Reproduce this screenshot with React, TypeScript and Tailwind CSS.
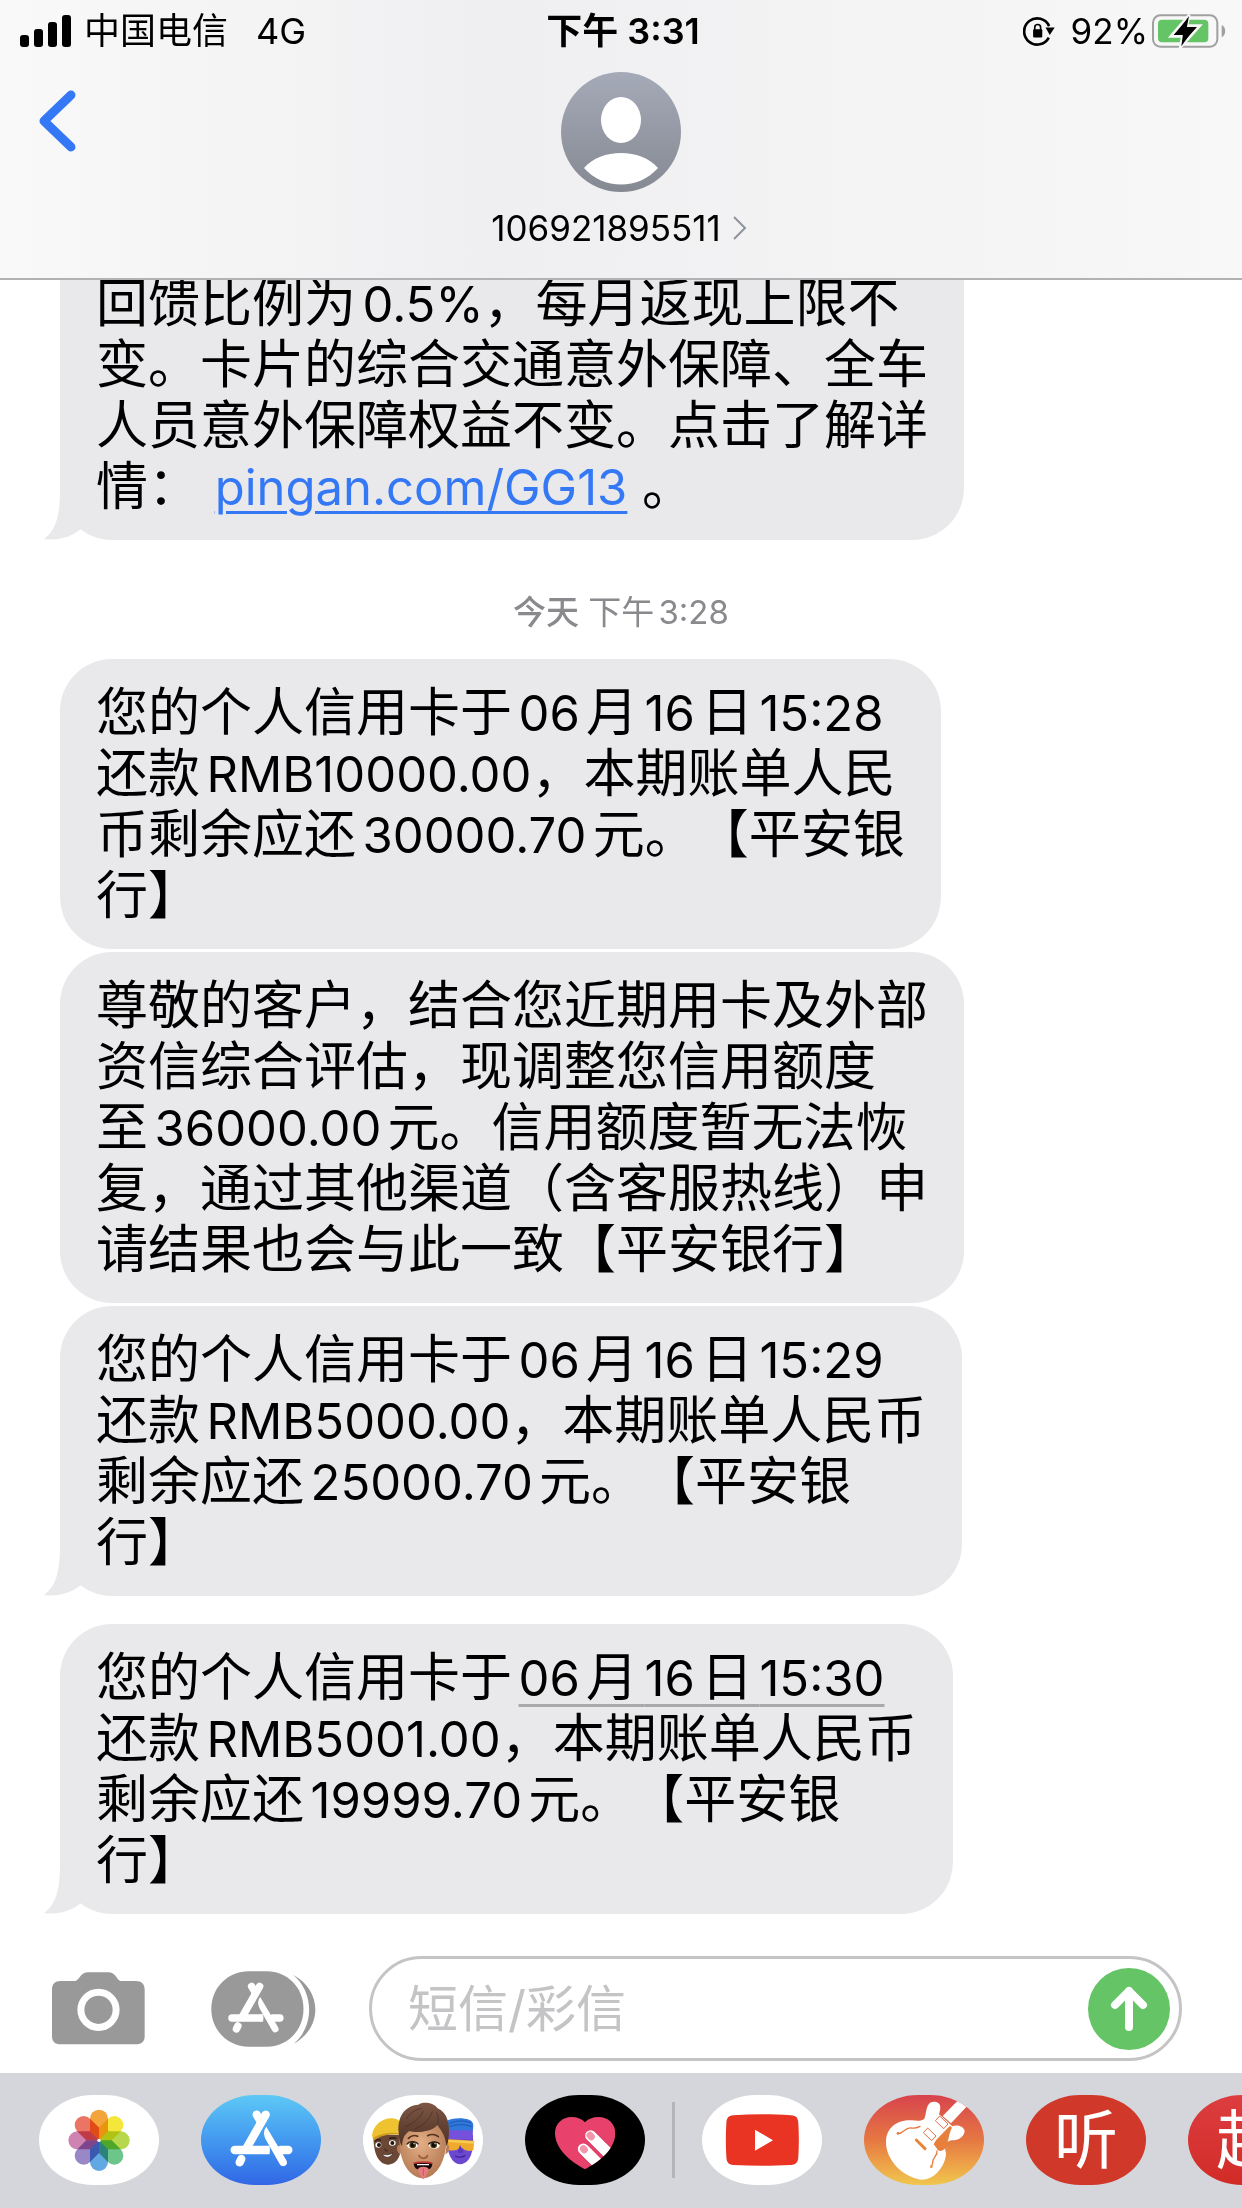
import React from 'react';
import clsx from 'clsx';

interface BubbleProps {
  lines: React.ReactNode[];
  tail?: boolean;
  className?: string;
}

// Latin letters and digits run slightly smaller than the Chinese text around them
const mixed = (text: string) =>
  text.split(/([\x21-\x7e]+)/).map((part, i) =>
    i % 2 ? <span key={i} className="text-[49px] leading-none">{part}</span> : part
  );

const Bubble: React.FC<BubbleProps> = ({ lines, tail = false, className }) => (
  <div
    className={clsx(
      'relative w-fit bg-[#e9e9eb] px-9 py-[23px] text-[52px] leading-[61px] whitespace-nowrap',
      className ?? 'rounded-[52px]'
    )}
  >
    {lines.map((line, i) => (
      <p key={i}>{typeof line === 'string' ? mixed(line) : line}</p>
    ))}
    {tail && (
      <svg viewBox="0 0 60 50" className="absolute -left-4 bottom-0 w-[60px] h-[50px]" fill="#e9e9eb">
        <path d="M16 0C16 26 12 40 0 49C14 51 28 47 38 38L60 0Z" />
      </svg>
    )}
  </div>
);

const AppStoreGlyph: React.FC = () => (
  <g fill="none" stroke="#fff" strokeWidth="25" strokeLinecap="round">
    <path d="M797 554L738 657" />
    <path d="M770 554L782 574" />
    <path d="M704 660H797" />
    <path d="M797 660H809" strokeLinecap="butt" />
    <path d="M842 660H865" />
    <path d="M724 687L719 697" />
    <path d="M799 590C790 602 790 614 798 630L839 702C843 709 851 711 857 706C862 702 862 697 859 691Z" fill="#fff" stroke="none" />
  </g>
);

const PETALS = ['#f3a43b', '#f5e63b', '#b7d84c', '#6cc58a', '#62a8e2', '#9a87c8', '#cf83b3', '#ec7464'];

const PhotosIcon: React.FC = () => (
  <svg viewBox="117 495 360 270" className="w-full h-full">
    <g transform="translate(297 631)" className="isolate">
      {PETALS.map((color, i) => (
        <path
          key={color}
          d="M0 0L-27 -27V-65A27 27 0 0 1 27 -65V-27Z"
          fill={color}
          transform={`rotate(${i * 45})`}
          className="mix-blend-multiply"
        />
      ))}
      <circle r="5" fill="#fff" />
    </g>
  </svg>
);

const MemojiIcon: React.FC = () => (
  <svg viewBox="24 30 360 270" className="w-full h-full">
    <defs>
      <linearGradient id="hair" x1="0" y1="0" x2="0" y2="1">
        <stop offset="0" stopColor="#7d5745" />
        <stop offset="1" stopColor="#4d3024" />
      </linearGradient>
      <radialGradient id="skin" cx=".45" cy=".4" r=".6">
        <stop offset="0" stopColor="#e3ae86" />
        <stop offset="1" stopColor="#b57b55" />
      </radialGradient>
    </defs>
    {/* left face */}
    <path d="M55 148C55 200 66 236 98 239C128 238 142 210 142 150Z" fill="#6b4735" />
    <path d="M51 152C54 120 82 99 112 100C128 101 138 108 142 128L140 147C105 143 78 146 55 165Z" fill="#eec32f" />
    <path d="M54 158C80 143 110 141 140 145V150C105 146 78 151 56 167Z" fill="#cf9c1d" />
    <ellipse cx="70" cy="180" rx="9" ry="8" fill="#fff" />
    <circle cx="72" cy="180" r="6" fill="#20140f" />
    <ellipse cx="112" cy="174" rx="10" ry="8" fill="#fff" />
    <circle cx="112" cy="174" r="6" fill="#20140f" />
    <path d="M60 169C66 163 72 163 78 166M102 161C110 157 118 158 124 161" fill="none" stroke="#2b1a12" strokeWidth="4" />
    <path d="M82 207C94 211 104 210 113 204C110 218 90 222 82 207Z" fill="#fff" stroke="#3a2016" strokeWidth="2" />
    <path d="M90 190C88 197 95 199 98 195" fill="none" stroke="#4a2d20" strokeWidth="4" />
    {/* right face */}
    <path d="M274 150H354C356 200 347 234 316 238C290 237 276 208 274 150Z" fill="#6a48cf" />
    <path d="M272 110C290 97 325 98 342 104C356 109 356 120 354 133L352 150H276Z" fill="#2f77d8" />
    <path d="M284 116C305 105 330 106 348 114M284 125C305 117 330 117 350 125" fill="none" stroke="#1c58b5" strokeWidth="3" />
    <path d="M276 136H353V162H276Z" fill="#7450dc" />
    <path d="M274 162L358 167L355 195C345 200 332 199 323 190L313 190C305 197 290 199 278 194Z" fill="#efa92b" />
    <path d="M276 164L357 169V176L276 171Z" fill="#f8cb55" />
    <path d="M315 180L308 202C315 206 322 205 326 201Z" fill="#5937bd" />
    <path d="M300 213C310 218 322 217 331 211" fill="none" stroke="#41249c" strokeWidth="4" />
    {/* front face */}
    <path d="M134 180C123 177 123 204 137 208ZM275 178C286 176 285 204 271 208Z" fill="#b87c56" />
    <path d="M134 130C130 190 137 240 172 268C192 283 214 284 235 268C268 240 277 190 275 130C230 95 170 98 134 130Z" fill="url(#skin)" />
    <path d="M131 142C126 95 150 62 190 59C204 49 235 52 248 70C278 83 288 120 279 172L274 184C272 155 263 142 247 120C232 141 180 145 164 138C150 146 143 157 141 184C134 174 132 158 131 142Z" fill="url(#hair)" />
    <path d="M150 126C170 118 196 100 205 78M180 132C208 120 226 100 232 80M155 100C165 85 180 74 200 70M248 120C252 105 250 90 244 80" fill="none" stroke="#432a1f" strokeWidth="3" opacity=".6" />
    <path d="M160 160C168 151 180 150 188 154M218 152C228 146 242 148 250 155" fill="none" stroke="#54331f" strokeWidth="5" strokeLinecap="round" />
    <ellipse cx="172" cy="181" rx="16" ry="10" fill="#fff" />
    <ellipse cx="238" cy="181" rx="16" ry="10" fill="#fff" />
    <circle cx="173" cy="180" r="10" fill="#4a3a12" />
    <circle cx="236" cy="180" r="10" fill="#4a3a12" />
    <circle cx="173" cy="180" r="6" fill="#0d0a05" />
    <circle cx="236" cy="180" r="6" fill="#0d0a05" />
    <circle cx="177" cy="176" r="2" fill="#fff" />
    <circle cx="240" cy="176" r="2" fill="#fff" />
    <path d="M156 178C162 168 182 167 190 178M220 178C228 168 248 168 254 178" fill="none" stroke="#2a1810" strokeWidth="4" />
    <path d="M192 212C196 222 214 222 217 212" fill="none" stroke="#a0623f" strokeWidth="6" strokeLinecap="round" />
    <path d="M176 235C190 230 218 230 232 235C232 250 222 256 205 256C186 256 177 250 176 235Z" fill="#17090a" />
    <path d="M176 235C190 230 218 230 232 235" fill="none" stroke="#c33b34" strokeWidth="5" />
    <path d="M186 237H222V241H186Z" fill="#fff" />
    <path d="M189 252C194 243 216 243 221 252C216 262 214 276 205 283C195 276 193 262 189 252Z" fill="#e87b80" />
    <path d="M205 250V272" stroke="#c8555c" strokeWidth="3" />
  </svg>
);

const HeartTouchIcon: React.FC = () => (
  <svg viewBox="555 495 360 270" className="w-full h-full">
    <defs>
      <clipPath id="heart">
        <path d="M735 718C690 695 645 655 645 610C645 580 668 561 694 561C712 561 726 567 735 577C744 567 758 561 776 561C804 561 826 581 826 610C826 655 780 695 735 718Z" />
      </clipPath>
    </defs>
    <g clipPath="url(#heart)">
      <path d="M640 555H830V725H640Z" fill="#e8426c" />
      <g strokeLinecap="round" fill="none">
        <path d="M734 662L792 720M757 622L840 705" stroke="#c42f55" strokeWidth="38" opacity=".5" />
        <path d="M730 657L792 719M752 617L840 705" stroke="#fff" strokeWidth="33" />
        <path d="M730 656L733 659M750 616L754 620" stroke="#f396ab" strokeWidth="21" />
      </g>
    </g>
  </svg>
);

const YouTubeIcon: React.FC = () => (
  <svg viewBox="0 0 360 270" className="w-full h-full">
    <path d="M94 61C150 57 211 57 266 61C284 62 288 69 289 84C291 116 291 154 289 186C288 201 284 208 266 210C211 213 150 213 94 210C79 209 74 202 73 186C71 154 71 116 73 84C74 69 79 62 94 61Z" fill="#e93323" />
    <path d="M159 104V167L213 136Z" fill="#fff" />
  </svg>
);

const GarageBandIcon: React.FC = () => (
  <svg viewBox="27 30 360 270" className="w-full h-full">
    <path d="M263 93L313 42L336 64L288 115Z" fill="#fff" />
    <path
      d="M208 101C216 85 211 49 238 50C258 51 259 67 252 88L262 96L292 124C303 118 325 122 329 137C328 158 305 167 290 166C275 168 265 180 273 204C273 240 240 284 201 284C145 278 92 225 93 170C94 125 130 104 170 106C188 107 199 109 208 101Z"
      fill="#fff"
    />
    <path d="M285 122L291 128C278 150 281 185 266 194C257 199 250 200 245 190L236 178L244 164Z" fill="#e8803d" />
    <g fill="#fff" stroke="#e46f41" strokeWidth="3">
      <path d="M205 143L218 129L243 153L230 167Z" />
      <path d="M241 107L254 93L279 117L266 131Z" />
    </g>
    <path d="M184 165L210 191" stroke="#e8873c" strokeWidth="9" strokeLinecap="round" />
    <path d="M128 146C145 148 150 126 168 129C180 131 188 128 195 124M246 198C249 212 232 216 233 234L229 245" fill="none" stroke="#e57a3e" strokeWidth="4" strokeLinecap="round" />
    <circle cx="129" cy="145" r="4" fill="#e57a3e" />
    <circle cx="229" cy="245" r="4" fill="#e9913c" />
  </svg>
);

interface TileProps {
  label: string;
  className: string;
  children: React.ReactNode;
}

const Tile: React.FC<TileProps> = ({ label, className, children }) => (
  <button
    aria-label={label}
    className={clsx(
      'flex items-center justify-center shrink-0 w-[120px] h-[90px] rounded-[54px/45px] overflow-hidden text-white text-[64px] leading-none',
      className
    )}
  >
    {children}
  </button>
);

const StatusBar: React.FC = () => (
  <div className="grid grid-cols-3 items-center h-[62px] pl-5 pr-4 text-[36px] leading-none whitespace-nowrap">
    <div className="flex items-center">
      <svg viewBox="0 0 52 32" className="w-[52px] h-8">
        <rect x="0" y="20" width="9" height="12" rx="3" />
        <rect x="14" y="14" width="9" height="18" rx="3" />
        <rect x="28" y="7" width="9" height="25" rx="3" />
        <rect x="42" y="0" width="9" height="32" rx="3" />
      </svg>
      <span className="ml-3">中国电信</span>
      <span className="ml-7">4G</span>
    </div>
    <span className="text-center font-semibold">下午 3:31</span>
    <div className="flex items-center justify-end">
      <svg viewBox="44 34 98 90" className="w-8 h-[30px] mr-4" fill="none" stroke="#000">
        <path d="M123 99A40 40 0 1 1 124 64" strokeWidth="8" />
        <path d="M113 68H141L126 91Z" fill="#000" stroke="none" />
        <rect x="75" y="74" width="28" height="25" rx="3" fill="#000" stroke="none" />
        <path d="M80 76V68C80 56 98 56 98 68V76" strokeWidth="5" />
      </svg>
      <span className="mr-1 text-[35px]">92%</span>
      <svg viewBox="428 22 222 106" className="w-[74px] h-9">
        <rect x="431" y="28" width="193" height="94" rx="22" fill="none" stroke="#a0a0a0" strokeWidth="6" />
        <rect x="446" y="41" width="151" height="68" rx="12" fill="#65c466" />
        <path d="M637 57C651 62 651 88 637 94Z" fill="#a0a0a0" />
        <path d="M540 26L484 91H519L512 126L572 59H533Z" fill="#000" stroke="#f7f7f7" strokeWidth="8" />
        <path d="M539 30L500 84H521L516 121L555 67H532Z" fill="#000" />
      </svg>
    </div>
  </div>
);

const ChatHeader: React.FC = () => (
  <header className="shrink-0 h-[280px] border-b-2 border-[#b2b2b4] bg-linear-to-r from-[#f9f9f9] via-[#efeff1] via-40% to-[#f8f8f8]">
    <StatusBar />
    <div className="grid grid-cols-3 items-start px-9 pt-[10px]">
      <button aria-label="返回" className="w-fit pt-4">
        <svg viewBox="0 0 42 66" className="w-[42px] h-[66px]" fill="none" stroke="#3478f6" strokeWidth="9" strokeLinecap="round" strokeLinejoin="round">
          <path d="M35 7L8 33L35 59" />
        </svg>
      </button>
      <button className="flex flex-col items-center text-[35px] leading-[38px]">
        <svg viewBox="0 0 121 121" className="w-[121px] h-[121px]">
          <defs>
            <linearGradient id="avatar" x1="0" y1="0" x2="0" y2="1">
              <stop offset="0" stopColor="#a5aab8" />
              <stop offset="1" stopColor="#858992" />
            </linearGradient>
          </defs>
          <circle cx="60" cy="60" r="60" fill="url(#avatar)" />
          <ellipse cx="60" cy="48" rx="20" ry="23" fill="#fff" />
          <path d="M23 96C40 76 80 76 97 96C78 118 42 118 23 96Z" fill="#fff" />
        </svg>
        <span className="flex items-center gap-3 pt-4 pr-1">
          106921895511
          <svg viewBox="0 0 14 24" className="w-[14px] h-6" fill="none" stroke="#8e939c" strokeWidth="2">
            <path d="M1 1L12 12L1 23" />
          </svg>
        </span>
      </button>
    </div>
  </header>
);

const ComposeBar: React.FC = () => (
  <form className="flex items-center shrink-0 pl-[52px] pr-[60px] pb-3">
    <button type="button" aria-label="相机">
      <svg viewBox="156 128 280 218" className="w-[93px] h-[73px]">
        <path d="M182 154H226C240 152 240 128 266 128H324C350 128 350 152 362 154H408C426 154 435 163 435 180V320C435 337 426 345 408 345H182C165 345 156 337 156 320V180C156 163 165 154 182 154Z" fill="#999" />
        <circle cx="296" cy="241" r="53" fill="none" stroke="#fff" strokeWidth="21" />
      </svg>
    </button>
    <button type="button" aria-label="应用" className="ml-[66px]">
      <svg viewBox="633 122 316 230" className="w-[105px] h-[76px]">
        <path d="M746 123H801C861 123 912 170 912 237S861 351 801 351H746C686 351 633 304 633 237S686 123 746 123Z" fill="#999" />
        <path d="M880 133C970 180 970 294 883 342C945 290 945 185 880 133Z" fill="#999" />
        <g transform="translate(62 -330) scale(.9)">
          <AppStoreGlyph />
        </g>
      </svg>
    </button>
    <div className="flex items-center flex-1 min-w-0 h-[105px] ml-[53px] pl-9 pr-[9px] border-3 border-[#c4c4c6] rounded-full">
      <input
        aria-label="短信/彩信"
        placeholder="短信/彩信"
        className="flex-1 min-w-0 text-[50px] leading-[60px] outline-none placeholder:text-[#c4c4c6]"
      />
      <button type="button" aria-label="发送" className="shrink-0 w-[82px] h-[82px] rounded-full bg-[#65c466]">
        <svg viewBox="0 0 82 82" className="w-full h-full" fill="none" stroke="#fff" strokeWidth="8" strokeLinecap="round" strokeLinejoin="round">
          <path d="M41 59V23M27 37L41 23L55 37" />
        </svg>
      </button>
    </div>
  </form>
);

const AppDrawer: React.FC = () => (
  <nav className="flex items-start shrink-0 gap-[42px] h-[135px] pl-[39px] pt-[22px] bg-[#d5d6db] overflow-hidden">
    <Tile label="照片" className="bg-white"><PhotosIcon /></Tile>
    <Tile label="App Store" className="bg-linear-to-b from-[#5ec8f6] to-[#3266e5]">
      <svg viewBox="603 495 360 270" className="w-full h-full">
        <AppStoreGlyph />
      </svg>
    </Tile>
    <Tile label="拟我表情" className="bg-white"><MemojiIcon /></Tile>
    <Tile label="Digital Touch" className="bg-black"><HeartTouchIcon /></Tile>
    <div className="flex items-center shrink-0 gap-[27px] -ml-[15px]">
      <span className="w-[3px] h-[76px] bg-[#b4b5b9]" />
      <Tile label="YouTube" className="bg-white"><YouTubeIcon /></Tile>
    </div>
    <Tile label="库乐队" className="bg-linear-to-b from-[#d8424c] via-[#e57742] to-[#f0c64d]"><GarageBandIcon /></Tile>
    <Tile label="听" className="bg-[#d03829]">听</Tile>
    <Tile label="起" className="bg-linear-to-b from-[#dd3d40] to-[#d12b26]">起</Tile>
  </nav>
);

export default function App() {
  return (
    <div
      lang="zh-CN"
      className="flex flex-col h-screen overflow-hidden bg-white text-black font-['Inter','Noto_Sans_CJK_SC',sans-serif] [text-spacing-trim:space-all] [text-autospace:normal]"
    >
      <ChatHeader />
      <main className="flex flex-col flex-1 justify-end min-h-0 overflow-hidden pl-[60px] pb-[42px]">
        <Bubble
          tail
          className="rounded-b-[52px]"
          lines={[
            '回馈比例为0.5%，每月返现上限不',
            '变。卡片的综合交通意外保障、全车',
            '人员意外保障权益不变。点击了解详',
            <>情： <a href="#" className="text-[49px] leading-none text-[#3478f6] underline decoration-3 underline-offset-6">pingan.com/GG13</a> 。</>,
          ]}
        />
        <p className="mt-[52px] mb-[27px] mr-[60px] text-center text-[33px] leading-10 text-[#8a8a8e]">
          <span className="font-medium">今天</span> 下午3:28
        </p>
        <div className="flex flex-col gap-[3px]">
          <Bubble
            lines={[
              '您的个人信用卡于06月16日15:28',
              '还款RMB10000.00，本期账单人民',
              '币剩余应还30000.70元。【平安银',
              '行】',
            ]}
          />
          <Bubble
            lines={[
              '尊敬的客户，结合您近期用卡及外部',
              '资信综合评估，现调整您信用额度',
              '至36000.00元。信用额度暂无法恢',
              '复，通过其他渠道（含客服热线）申',
              '请结果也会与此一致【平安银行】',
            ]}
          />
          <Bubble
            tail
            lines={[
              '您的个人信用卡于06月16日15:29',
              '还款RMB5000.00，本期账单人民币',
              '剩余应还25000.70元。【平安银',
              '行】',
            ]}
          />
        </div>
        <Bubble
          tail
          className="rounded-[52px] mt-7"
          lines={[
            <>您的个人信用卡于<a href="#" className="underline decoration-[#a9a9ac] decoration-3 underline-offset-8 [text-decoration-skip-ink:none]">{mixed('06月16日15:30')}</a></>,
            '还款RMB5001.00，本期账单人民币',
            '剩余应还19999.70元。【平安银',
            '行】',
          ]}
        />
      </main>
      <ComposeBar />
      <AppDrawer />
    </div>
  );
}
